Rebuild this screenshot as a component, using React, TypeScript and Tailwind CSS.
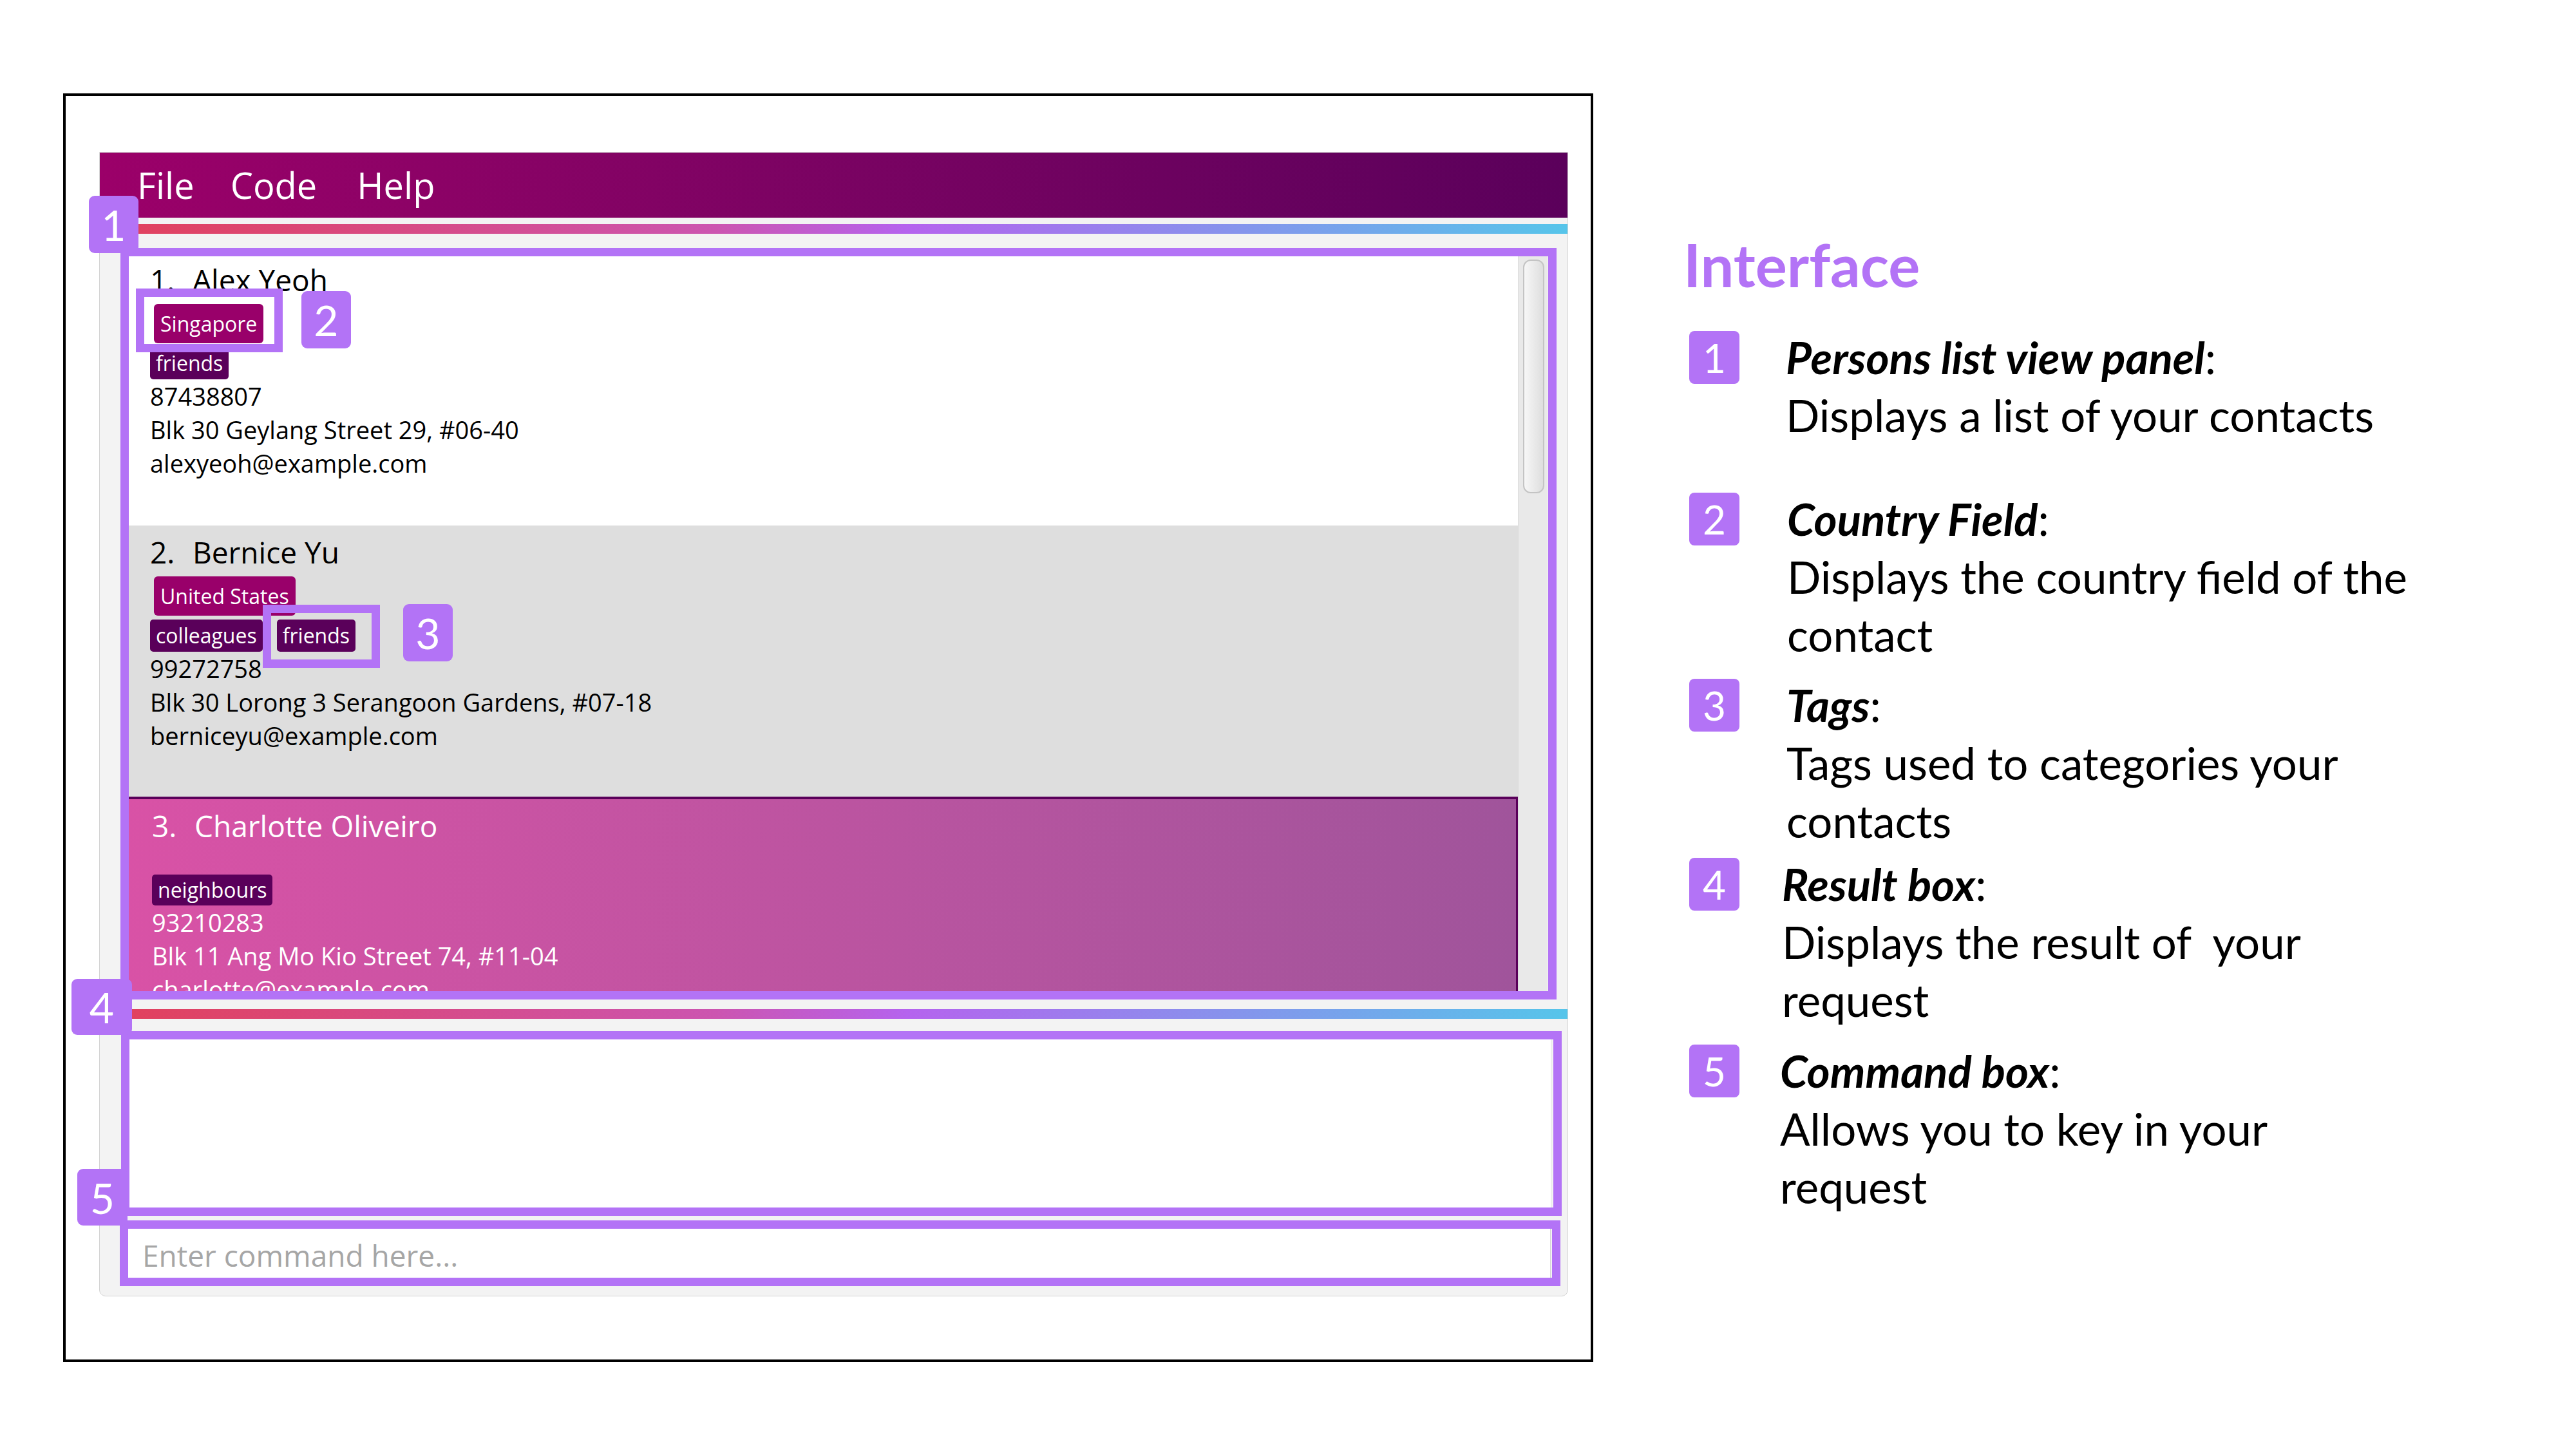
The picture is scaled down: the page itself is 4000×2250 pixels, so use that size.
type Person = {
  index: number;
  name: string;
  country?: string;
  tags: string[];
  phone: string;
  address: string;
  email: string;
};

const people: Person[] = [
  {
    index: 1,
    name: 'Alex Yeoh',
    country: 'Singapore',
    tags: ['friends'],
    phone: '87438807',
    address: 'Blk 30 Geylang Street 29, #06-40',
    email: 'alexyeoh@example.com',
  },
  {
    index: 2,
    name: 'Bernice Yu',
    country: 'United States',
    tags: ['colleagues', 'friends'],
    phone: '99272758',
    address: 'Blk 30 Lorong 3 Serangoon Gardens, #07-18',
    email: 'berniceyu@example.com',
  },
  {
    index: 3,
    name: 'Charlotte Oliveiro',
    tags: ['neighbours'],
    phone: '93210283',
    address: 'Blk 11 Ang Mo Kio Street 74, #11-04',
    email: 'charlotte@example.com',
  },
];

const notes = [
  { n: 1, title: 'Persons list view panel', lines: ['Displays a list of your contacts'], gap: 'mt-0', shift: 'ml-[72px]' },
  { n: 2, title: 'Country Field', lines: ['Displays the country field of the', 'contact'], gap: 'mt-[71px]', shift: 'ml-[74px]' },
  { n: 3, title: 'Tags', lines: ['Tags used to categories your', 'contacts'], gap: 'mt-[19px]', shift: 'ml-[73px]' },
  { n: 4, title: 'Result box', lines: ['Displays the result of  your', 'request'], gap: 'mt-[8px]', shift: 'ml-[66px]' },
  { n: 5, title: 'Command box', lines: ['Allows you to key in your', 'request'], gap: 'mt-[20px]', shift: 'ml-[63px]' },
];

function Lines({ p, dark }: { p: Person; dark: boolean }) {
  return (
    <div className={`text-[38px] leading-[52px] ${dark ? 'text-black' : 'text-white'}`}>
      <div>{p.phone}</div>
      <div>{p.address}</div>
      <div>{p.email}</div>
    </div>
  );
}

function Tags({ tags, height }: { tags: string[]; height: string }) {
  return (
    <div className={`flex gap-[22px] ${height}`}>
      {tags.map((t, i) => (
        <span
          key={i}
          className="h-full px-[9px] rounded-[5px] bg-[#5a005a] text-white text-[32px] flex items-center"
        >
          {t}
        </span>
      ))}
    </div>
  );
}

function PersonCard({ p, bg }: { p: Person; bg: string }) {
  return (
    <div className={`shrink-0 pl-[46px] pt-[10px] ${bg}`}>
      <div className="flex text-[46px] leading-[62px] text-black">
        <span className="w-[66px]">{p.index}.</span>
        <span>{p.name}</span>
      </div>
      <div className="mt-[7px] ml-[6px] flex">
        <span className="h-[61px] px-[10px] rounded-[6px] bg-[#99006a] text-white text-[32px] flex items-center">
          {p.country}
        </span>
      </div>
      <div className="mt-[6px]">
        <Tags tags={p.tags} height="h-[50px]" />
      </div>
      <Lines p={p} dark={true} />
    </div>
  );
}

function SelectedCard({ p }: { p: Person }) {
  return (
    <div className="h-[430px] shrink-0 border-t-[4px] border-x-[3px] border-[#5a005a] bg-gradient-to-r from-[#d952a6] to-[#a0549b] pl-[46px] pt-[10px]">
      <div className="flex text-[46px] leading-[62px] text-white">
        <span className="w-[66px]">{p.index}.</span>
        <span>{p.name}</span>
      </div>
      <div className="mt-[45px]">
        <Tags tags={p.tags} height="h-[48px]" />
      </div>
      <Lines p={p} dark={false} />
    </div>
  );
}

function AppWindow() {
  return (
    <div className="w-[2281px] h-[1777px] flex flex-col bg-[#f3f3f3] border border-[#d4d4d4] rounded-b-[10px] font-['Open_Sans',sans-serif]">
      <div className="h-[101px] shrink-0 bg-gradient-to-r from-[#9b0069] to-[#5b005b] flex items-center pl-[58px] gap-[56px] text-white text-[56px] leading-[101px]">
        <span>File</span>
        <span>Code</span>
        <span className="ml-[6px]">Help</span>
      </div>
      <div className="mt-[10px] h-[15px] shrink-0 bg-[linear-gradient(to_right,#e2405a,#cc55b0_42%,#b563ee_55%,#56c5ea)]" />
      <div className="mt-[30px] ml-[32px] mr-[31px] h-[1147px] shrink-0 flex overflow-hidden">
        <div className="flex-1 flex flex-col">
          <PersonCard p={people[0]} bg="h-[423px] bg-white" />
          <PersonCard p={people[1]} bg="h-[421px] bg-[#dedede]" />
          <SelectedCard p={people[2]} />
        </div>
        <div className="w-[46px] bg-[#e9e9e9] border-l border-[#dcdcdc] pt-[10px] pl-[7px]">
          <div className="w-[33px] h-[363px] rounded-[12px] border-2 border-[#c4c4c4] bg-gradient-to-r from-[#f7f7f7] to-[#dedede]" />
        </div>
      </div>
      <div className="mt-[27px] h-[15px] shrink-0 bg-[linear-gradient(to_right,#e2405a,#cc55b0_42%,#b563ee_55%,#56c5ea)]" />
      <div className="mt-[22px] ml-[34px] mr-[25px] h-[282px] shrink-0 bg-white border border-[#e0e0e0]" />
      <div className="mt-[20px] ml-[33px] mr-[26px] h-[82px] shrink-0 bg-white border border-[#d6d6d6] pl-[32px] pt-[4px] text-[46px] leading-[76px] text-[#a6a6a6]">
        Enter command here...
      </div>
    </div>
  );
}

function Notes() {
  return (
    <div className="ml-[140px] mt-[220px] font-['Lato',sans-serif] text-black">
      <div className="text-[92px] leading-[92px] font-bold text-[#b373f6]">Interface</div>
      <div className="mt-[53px] flex flex-col">
        {notes.map((it) => (
          <div key={it.n} className={`flex items-start ${it.gap}`}>
            <div className="ml-[9px] mt-[4px] w-[78px] h-[82px] shrink-0 rounded-[8px] bg-[#b373f6] text-white text-[62px] flex items-center justify-center">
              {it.n}
            </div>
            <div className={it.shift}>
              <div className="text-[69px] leading-[90px]">
                <span className="font-bold italic">{it.title}</span>:
              </div>
              {it.lines.map((l, i) => (
                <div key={i} className="text-[69px] leading-[90px] whitespace-pre">
                  {l}
                </div>
              ))}
            </div>
          </div>
        ))}
      </div>
    </div>
  );
}

export default function App() {
  return (
    <div className="relative w-[4000px] h-[2250px] bg-white overflow-hidden">
      <div className="flex pt-[145px] pl-[98px]">
        <div className="w-[2376px] h-[1970px] shrink-0 border-[4px] border-black pl-[52px] pt-[87px]">
          <AppWindow />
        </div>
        <Notes />
      </div>

      {/* annotation boxes over the screenshot */}
      <div className="absolute left-[187px] top-[385px] w-[2230px] h-[1167px] border-[13px] border-[#b373f6]" />
      <div className="absolute left-[211px] top-[448px] w-[228px] h-[99px] border-[13px] border-[#b373f6]" />
      <div className="absolute left-[408px] top-[939px] w-[182px] h-[98px] border-[13px] border-[#b373f6]" />
      <div className="absolute left-[188px] top-[1601px] w-[2237px] h-[287px] border-[13px] border-[#b373f6]" />
      <div className="absolute left-[186px] top-[1895px] w-[2237px] h-[102px] border-[13px] border-[#b373f6]" />

      <div className="absolute left-[138px] top-[304px] w-[77px] h-[89px] rounded-[9px] bg-[#b373f6] text-white text-[66px] font-['Lato',sans-serif] flex items-center justify-center">1</div>
      <div className="absolute left-[468px] top-[452px] w-[77px] h-[89px] rounded-[9px] bg-[#b373f6] text-white text-[66px] font-['Lato',sans-serif] flex items-center justify-center">2</div>
      <div className="absolute left-[626px] top-[938px] w-[77px] h-[89px] rounded-[9px] bg-[#b373f6] text-white text-[66px] font-['Lato',sans-serif] flex items-center justify-center">3</div>
      <div className="absolute left-[111px] top-[1520px] w-[94px] h-[87px] rounded-[9px] bg-[#b373f6] text-white text-[66px] font-['Lato',sans-serif] flex items-center justify-center">4</div>
      <div className="absolute left-[120px] top-[1815px] w-[78px] h-[88px] rounded-[9px] bg-[#b373f6] text-white text-[66px] font-['Lato',sans-serif] flex items-center justify-center">5</div>
    </div>
  );
}
